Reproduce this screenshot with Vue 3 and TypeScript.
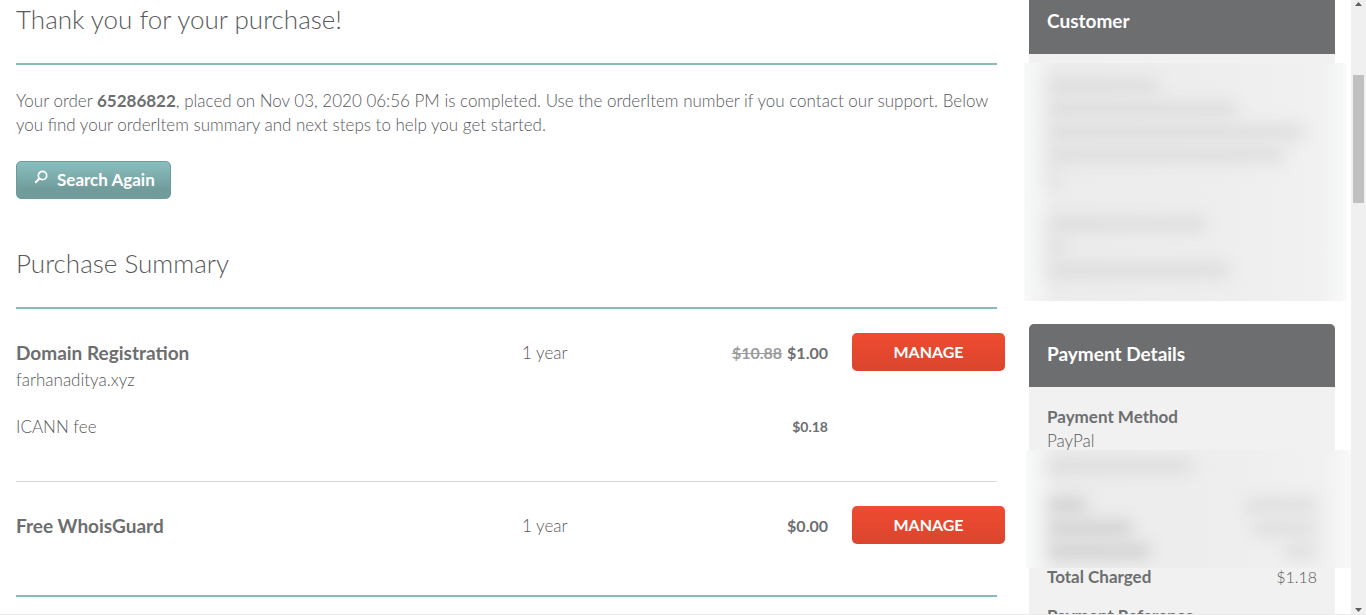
<script setup lang="ts">
interface Item {
  name: string
  domain?: string
  term: string
  oldPrice?: string
  price: string
  fee?: { label: string; price: string }
}

const items: Item[] = [
  {
    name: 'Domain Registration',
    domain: 'farhanaditya.xyz',
    term: '1 year',
    oldPrice: '$10.88',
    price: '$1.00',
    fee: { label: 'ICANN fee', price: '$0.18' },
  },
  { name: 'Free WhoisGuard', term: '1 year', price: '$0.00' },
]

const customerLines: number[] = [112, 190, 258, 238, 10, 0, 160, 18, 184]
const paymentLines: { left: number; right: number }[] = [
  { left: 40, right: 72 },
  { left: 86, right: 66 },
  { left: 104, right: 34 },
]
</script>

<template>
  <div class="page">
    <div class="content">
      <main class="main">
        <h1 class="title first">Thank you for your purchase!</h1>
        <p class="intro">
          Your order <strong>65286822</strong>, placed on Nov 03, 2020 06:56 PM is completed. Use the
          orderItem number if you contact our support. Below you find your orderItem summary and next
          steps to help you get started.
        </p>
        <button type="button" class="search">
          <svg class="lens" width="14" height="14" viewBox="0 0 14 14" aria-hidden="true">
            <circle cx="8.5" cy="5.5" r="4.2" fill="none" stroke="#fff" stroke-width="1.7" />
            <path d="M5.5 8.5L1.2 12.8" stroke="#fff" stroke-width="2" />
          </svg>
          Search Again
        </button>
        <h2 class="title second">Purchase Summary</h2>
        <table class="summary">
          <tbody v-for="item in items" :key="item.name">
            <tr class="item">
              <td class="name">
                <h3>{{ item.name }}</h3>
                <span v-if="item.domain">{{ item.domain }}</span>
              </td>
              <td class="term">{{ item.term }}</td>
              <td class="price">
                <s v-if="item.oldPrice">{{ item.oldPrice }}</s>
                <strong>{{ item.price }}</strong>
              </td>
              <td class="action"><button type="button" class="manage">MANAGE</button></td>
            </tr>
            <tr v-if="item.fee" class="fee">
              <td>{{ item.fee.label }}</td>
              <td></td>
              <td class="price small">{{ item.fee.price }}</td>
              <td></td>
            </tr>
          </tbody>
        </table>
      </main>

      <aside class="side">
        <section class="card">
          <h2 class="head cut">Customer</h2>
          <div class="panel customer">
            <div class="hidden">
              <div v-for="(w, i) in customerLines" :key="i" class="line">
                <i class="smudge" :style="{ width: w + 'px' }"></i>
              </div>
            </div>
          </div>
        </section>
        <section class="card payment">
          <h2 class="head">Payment Details</h2>
          <div class="panel details">
            <strong>Payment Method</strong>
            <p>PayPal</p>
            <div class="hidden amounts">
              <div class="line account"><i class="smudge"></i></div>
              <div v-for="(l, i) in paymentLines" :key="i" class="line">
                <i class="smudge dark" :style="{ width: l.left + 'px' }"></i>
                <i class="smudge" :style="{ width: l.right + 'px' }"></i>
              </div>
            </div>
            <div class="total"><strong>Total Charged</strong><span>$1.18</span></div>
            <strong class="reference">Payment Reference</strong>
          </div>
        </section>
      </aside>
    </div>

    <div class="scrollbar" aria-hidden="true">
      <svg width="7" height="4" viewBox="0 0 7 4"><path d="M0 4L3.5 0L7 4Z" fill="#606060" /></svg>
      <div class="track"><div class="thumb"></div></div>
      <svg width="7" height="4" viewBox="0 0 7 4"><path d="M0 0L3.5 4L7 0Z" fill="#606060" /></svg>
    </div>
  </div>
</template>

<style>
body {
  margin: 0;
  background: #fff;
}
</style>

<style scoped>
.page {
  box-sizing: border-box;
  display: flex;
  height: 100vh;
  overflow: hidden;
  border-bottom: 1px solid #ebebeb;
  color: #58595b;
  font: 300 17px/24px Lato, "Open Sans", sans-serif;
}
strong, .price, h3 {
  color: #6d6e70;
  font-weight: 700;
}
h1, h2, h3, p {
  margin: 0;
}
.content {
  flex: 1;
  min-width: 0;
  display: grid;
  grid-template-columns: minmax(0, 1fr) 306px;
  column-gap: 32px;
  align-items: start;
  padding: 0 16px;
}
.title {
  border-bottom: 2px solid #87bcbb;
  font-size: 26px;
  font-weight: 300;
  line-height: 32px;
}
.first {
  padding: 3px 0 28px;
}
.second {
  margin-top: 48px;
  padding-bottom: 28px;
}
.intro {
  margin: 24px 0;
}
button {
  display: block;
  box-sizing: border-box;
  height: 38px;
  border: 0;
  border-radius: 5px;
  color: #fff;
  font: inherit;
  font-weight: 700;
}
.search {
  display: flex;
  align-items: center;
  gap: 9px;
  padding: 0 15px 0 17px;
  border: 1px solid #6a9c9b;
  background: linear-gradient(#8abfbf, #719c9c 75%);
}
.lens {
  margin-bottom: 6px;
}
.manage {
  width: 153px;
  padding: 0 0 1px;
  background: linear-gradient(#ef4b30, #db452e);
  font-size: 16px;
}
.summary {
  width: 100%;
  table-layout: fixed;
  border-collapse: collapse;
}
.summary tbody {
  border-bottom: 1px solid #d6d7d7;
}
.summary tbody:last-child {
  border-bottom: 2px solid #87bcbb;
}
td {
  padding: 0;
  vertical-align: top;
}
.item td {
  padding-top: 24px;
  height: 82px;
}
.summary tbody:last-child .item td {
  height: 89px;
}
.item h3 {
  padding: 6px 0 1px;
  font-size: 19px;
  line-height: 28px;
}
.name span {
  display: block;
}
td.term {
  width: 150px;
}
.item .term, .item .price {
  line-height: 40px;
}
.price {
  width: 156px;
  text-align: right;
  font-size: 16px;
}
.price s {
  margin-right: 5px;
  color: #9a9b9c;
}
.price.small {
  font-size: 14px;
}
.action {
  width: 169px;
}
.action .manage {
  margin: 0 -8px 0 24px;
}
.fee td {
  height: 66px;
}
.head {
  box-sizing: border-box;
  height: 63px;
  padding: 0 18px;
  border-radius: 5px 5px 0 0;
  background: #6d6e70;
  color: #fff;
  font-size: 19px;
  font-weight: 700;
  line-height: 60px;
}
.cut {
  height: 54px;
  border-radius: 0;
  line-height: 42px;
}
.panel {
  background: #f1f1f1;
}
.customer {
  padding-top: 9px;
}
.hidden {
  box-sizing: border-box;
  height: 238px;
  margin: 0 -11px 0 -5px;
  padding: 11px 29px 0 23px;
  overflow: hidden;
  background: linear-gradient(90deg, #f8f9f9, #ececec 10%, #eeeeee 60%, #f1f1f1 92%, #f8f9f9);
}
.line {
  display: flex;
  align-items: center;
  justify-content: space-between;
  height: 23px;
}
.smudge {
  height: 14px;
  border-radius: 7px;
  background: #dcdcdc;
  filter: blur(8px);
}
.smudge.dark {
  background: #cfcfcf;
}
.payment {
  margin-top: 23px;
}
.details {
  padding: 18px 18px 16px;
}
.details > strong {
  display: block;
}
.amounts {
  height: 118px;
  margin: -3px -34px -3px -21px;
  padding: 4px 34px 0 21px;
}
.line.account {
  margin-bottom: 16px;
}
.account .smudge {
  width: 146px;
}
.total {
  display: flex;
  justify-content: space-between;
}
.total span {
  font-size: 16px;
}
.details .reference {
  margin-top: 15px;
}
.scrollbar {
  box-sizing: border-box;
  flex: none;
  display: flex;
  flex-direction: column;
  align-items: center;
  width: 15px;
  padding: 2px 0;
  background: #f0f0f0;
}
.track {
  flex: 1;
  padding-top: 69px;
}
.thumb {
  width: 11px;
  height: 128px;
  background: #c1c0c0;
}
</style>
